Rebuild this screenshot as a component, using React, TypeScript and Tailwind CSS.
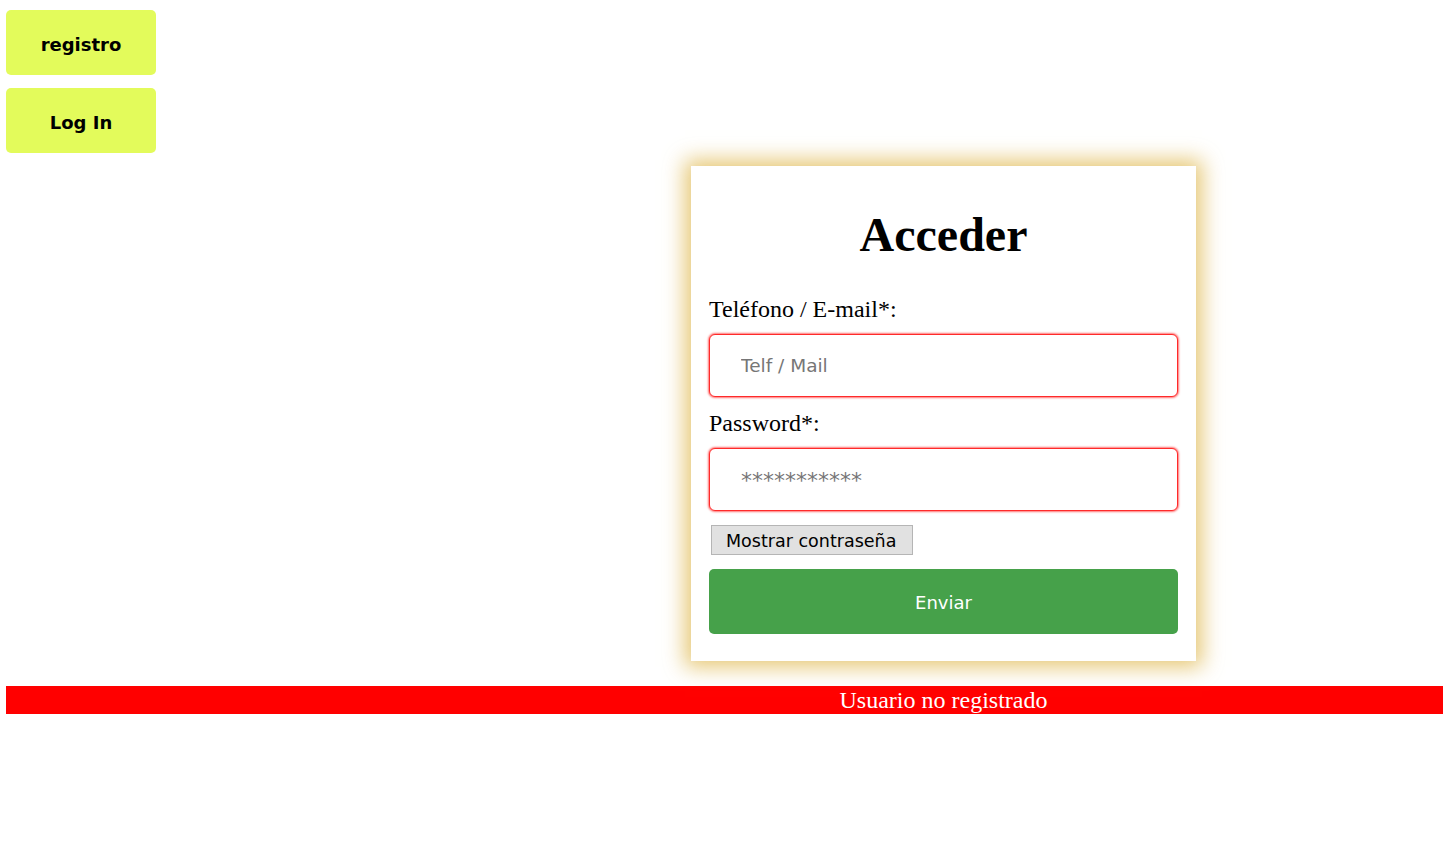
import React from "react";

const serif = "font-['Liberation_Serif',_'Times_New_Roman',_serif]";
const sans = "font-['DejaVu_Sans',_Verdana,_sans-serif]";

function NavButton({ label }: { label: string }) {
  return (
    <button
      type="button"
      className={`${sans} h-[65px] w-[150px] rounded-[5px] bg-[#e3fb5b] pt-[3px] text-[18px] font-bold text-black`}
    >
      {label}
    </button>
  );
}

function Field({
  label,
  placeholder,
  type,
  big,
}: {
  label: string;
  placeholder: string;
  type: string;
  big?: boolean;
}) {
  return (
    <div className="flex flex-col">
      <label className={`${serif} text-[24px] leading-[27px] text-black`}>{label}</label>
      <input
        type={type}
        placeholder={placeholder}
        className={`${sans} mt-[11px] h-[63px] w-full rounded-[6px] border border-[#ff2a2a] bg-white pl-[31px] text-[18.5px] text-black shadow-[0_0_2px_1px_rgba(255,0,0,0.55)] outline-none placeholder:text-[#767676] ${
          big ? "pt-[3px] placeholder:text-[22px]" : ""
        }`}
      />
    </div>
  );
}

export default function App() {
  return (
    <div className="min-h-screen bg-white pl-[6px] pt-[10px]">
      <div className="flex flex-col gap-[13px]">
        <NavButton label="registro" />
        <NavButton label="Log In" />
      </div>

      <div className="mt-[13px] flex">
        <div className="w-[438px] shrink-0" />
        <div className="flex flex-1 justify-center">
          <div className="w-[505px] bg-white px-[18px] pb-[27px] pt-[42px] shadow-[0_0_20px_6px_rgba(222,180,70,0.75)]">
            <h1 className={`${serif} text-center text-[48px] font-bold leading-[53px] text-black`}>
              Acceder
            </h1>
            <div className="mt-[35px]">
              <Field label="Teléfono / E-mail*:" placeholder="Telf / Mail" type="text" />
            </div>
            <div className="mt-[13px]">
              <Field label="Password*:" placeholder="***********" type="password" big />
            </div>
            <button
              type="button"
              className={`${sans} ml-[2px] mt-[14px] h-[30px] w-[202px] border border-[#b5b5b5] bg-[#e1e1e1] pl-[14px] pt-[2px] text-left text-[17.5px] text-black`}
            >
              Mostrar contraseña
            </button>
            <button
              type="button"
              className={`${sans} mt-[14px] block h-[65px] w-full rounded-[5px] bg-[#46a14a] pt-[2px] text-[18px] text-white`}
            >
              Enviar
            </button>
          </div>
        </div>
      </div>

      <div className="mt-[25px] flex h-[28px] bg-[#ff0000]">
        <div className="w-[438px] shrink-0" />
        <p className={`${serif} flex-1 text-center text-[24px] leading-[28px] text-white`}>
          Usuario no registrado
        </p>
      </div>
    </div>
  );
}
